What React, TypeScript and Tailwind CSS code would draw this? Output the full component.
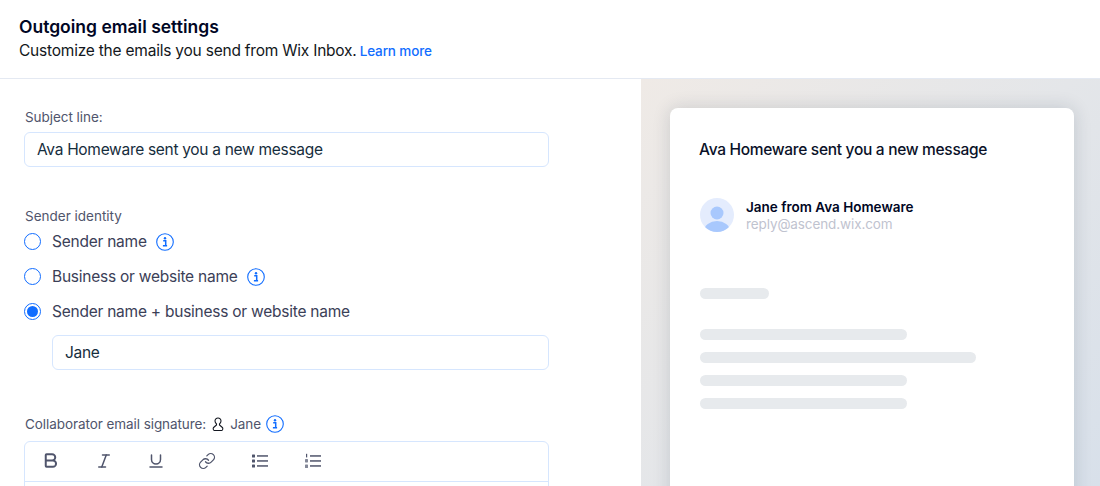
import { Bold, Italic, Underline, Link } from "lucide-react";

function InfoIcon() {
  return (
    <svg width="18" height="18" viewBox="0 0 18 18" fill="none" className="shrink-0">
      <circle cx="9" cy="9" r="8.300" stroke="#116dff" strokeWidth="1.100" />
      <circle cx="9" cy="5.200" r="1.200" fill="#116dff" />
      <path d="M7.200 7.800h2.500v4.800M6.900 12.800h4.200" stroke="#116dff" strokeWidth="1.500" fill="none" />
    </svg>
  );
}

function Radio({ checked }: { checked?: boolean }) {
  return (
    <span className="flex size-[17px] shrink-0 items-center justify-center rounded-full border border-[#116dff] bg-white">
      {checked ? <span className="size-[11px] rounded-full bg-[#116dff]" /> : null}
    </span>
  );
}

function RadioRow({ label, checked, info }: { label: string; checked?: boolean; info?: boolean }) {
  return (
    <div className="flex h-[35px] items-center">
      <Radio checked={checked} />
      <span className="ml-[11px] text-[15.5px] tracking-[-0.24px] text-[#3b4057]">{label}</span>
      {info ? (
        <span className="ml-[9px]">
          <InfoIcon />
        </span>
      ) : null}
    </div>
  );
}

function TextBox({ value }: { value: string }) {
  return (
    <div className="flex h-[35px] items-center rounded-md border border-[#d6e6fe] bg-white px-3 pt-px text-[15.5px] tracking-[-0.3px] text-[#162d3d]">
      {value}
    </div>
  );
}

function Skeleton({ className }: { className: string }) {
  return <div className={`h-[11px] rounded-full bg-[#e7eaed] ${className}`} />;
}

function BulletList() {
  return (
    <svg width="18" height="18" viewBox="0 0 18 18" fill="#50556c" className="ml-[5px]">
      <rect x="1" y="2.500" width="3" height="3" rx="0.500" />
      <rect x="1" y="7.500" width="3" height="3" rx="0.500" />
      <rect x="1" y="12.500" width="3" height="3" rx="0.500" />
      <rect x="6" y="3.200" width="11" height="1.500" />
      <rect x="6" y="8.200" width="11" height="1.500" />
      <rect x="6" y="13.200" width="11" height="1.500" />
    </svg>
  );
}

function NumberedList() {
  return (
    <svg width="18" height="18" viewBox="0 0 18 18" fill="#50556c" className="ml-[5px]" stroke="none">
      <rect x="2" y="1.800" width="1.200" height="3.600" />
      <rect x="1" y="7" width="3" height="3.400" rx="0.600" opacity="0.700" />
      <rect x="1" y="12.400" width="3" height="3.600" rx="0.600" opacity="0.700" />
      <rect x="6" y="3.200" width="11" height="1.500" />
      <rect x="6" y="8.200" width="11" height="1.500" />
      <rect x="6" y="13.200" width="11" height="1.500" />
    </svg>
  );
}

export default function App() {
  return (
    <div className="flex h-[486px] w-[1100px] flex-col overflow-hidden bg-white font-['Inter',sans-serif] text-[#000624]">
      <header className="h-[79px] shrink-0 border-b border-[#e4e9f2] pl-[19px] pt-[16px]">
        <h1 className="text-[17.5px] leading-[22px] font-semibold">Outgoing email settings</h1>
        <p className="mt-[1px] text-[15.5px] leading-[24px] tracking-[-0.22px] text-[#131720]">
          Customize the emails you send from Wix Inbox.{" "}
          <span className="-ml-px text-[13.5px] font-medium tracking-[-0.15px] text-[#116dff]">Learn more</span>
        </p>
      </header>

      <div className="flex min-h-0 flex-1">
        <main className="w-[641px] shrink-0 pl-[24px] pr-[92px] pt-[29px]">
          <label className="ml-px block text-[13.5px] leading-[18px] tracking-[-0.05px] text-[#50556c]">Subject line:</label>
          <div className="mt-[6px]">
            <TextBox value="Ava Homeware sent you a new message" />
          </div>

          <div className="ml-px mt-[40px] text-[13.5px] leading-[18px] text-[#50556c]">Sender identity</div>
          <div className="-mt-px">
            <RadioRow label="Sender name" info />
            <RadioRow label="Business or website name" info />
            <RadioRow label="Sender name + business or website name" checked />
          </div>
          <div className="ml-[28px] mt-[6px]">
            <TextBox value="Jane" />
          </div>

          <div className="ml-px mt-[43px] flex h-[22px] items-center text-[13.5px] tracking-[-0.07px] text-[#50556c]">
            <span>Collaborator email signature:</span>
            <svg width="14" height="15" viewBox="0 0 14 15" fill="none" className="ml-[5px]" stroke="#131720" strokeWidth="1.100">
              <path d="M7 1a3 3 0 0 1 3 3.100c0 1.300-.8 2.300-1.500 2.900v1l2.900 2.500c.8.700.4 3-.7 3H3.300c-1.100 0-1.500-2.300-.7-3l2.900-2.500V7C4.800 6.400 4 5.400 4 4.100A3 3 0 0 1 7 1z" />
            </svg>
            <span className="ml-[5px]">Jane</span>
            <span className="ml-[5px]">
              <InfoIcon />
            </span>
          </div>

          <div className="mt-[6px] rounded-t-md border border-[#d6e6fe]">
            <div className="flex h-[40px] items-center gap-[30px] border-b border-[#d6e6fe] pb-[2px] pl-[16px] text-[#50556c]">
              <Bold size={19} strokeWidth={2.500} />
              <Italic size={18} strokeWidth={2} className="ml-[5px]" />
              <Underline size={18} strokeWidth={2} className="ml-[4px]" />
              <Link size={18} strokeWidth={1.700} className="ml-[3px]" />
              <BulletList />
              <NumberedList />
            </div>
            <div className="h-[60px]" />
          </div>
        </main>

        <aside className="min-w-0 flex-1 bg-[linear-gradient(135deg,#efeae6_0%,#e4e6e9_50%,#d8e0ea_100%)] pl-[29px] pr-[26px] pt-[29px]">
          <div className="h-[500px] rounded-lg bg-white pl-[30px] pt-[30px] shadow-[0_0_18px_rgba(22,45,61,0.16)]">
            <div className="-ml-px text-[15.5px] leading-[24px] font-medium tracking-[-0.3px] text-[#0a1128]">
              Ava Homeware sent you a new message
            </div>
            <div className="mt-[36px] flex items-start">
              <svg width="34" height="34" viewBox="0 0 34 34" className="shrink-0">
                <defs>
                  <clipPath id="avatar-clip">
                    <circle cx="17" cy="17" r="17" />
                  </clipPath>
                </defs>
                <circle cx="17" cy="17" r="17" fill="#e4ecfd" />
                <g clipPath="url(#avatar-clip)" fill="#a8c8fd">
                  <circle cx="17" cy="15" r="6.500" />
                  <ellipse cx="17" cy="33" rx="13" ry="10" />
                </g>
              </svg>
              <div className="ml-3 pt-px text-[13.5px] leading-[17px]">
                <div className="font-semibold text-[#000624]">Jane from Ava Homeware</div>
                <div className="tracking-[-0.1px] text-[#bfc3cf]">reply@ascend.wix.com</div>
              </div>
            </div>
            <div className="mt-[55px] pr-[98px]">
              <Skeleton className="w-[69px]" />
              <div className="mt-[30px] flex flex-col gap-3">
                <Skeleton className="w-[207px]" />
                <Skeleton className="w-[276px]" />
                <Skeleton className="w-[207px]" />
                <Skeleton className="w-[207px]" />
              </div>
            </div>
          </div>
        </aside>
      </div>
    </div>
  );
}
